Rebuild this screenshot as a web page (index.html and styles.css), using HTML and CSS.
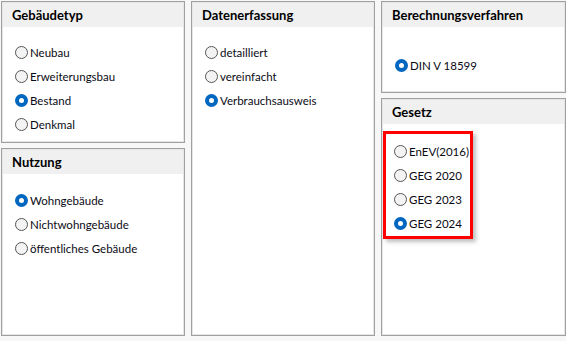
FILE: index.html
```html
<!DOCTYPE html>
<html lang="de">
<head>
    <meta charset="UTF-8">
    <title>Projektdaten</title>
    <link rel="stylesheet" href="styles.css">
</head>
<body>
    <div class="layout">
        <div class="column">
            <div class="panel panel-type">
                <div class="panel-title">Gebäudetyp</div>
                <div class="options">
                    <label class="option"><input type="radio" name="typ"> Neubau</label>
                    <label class="option"><input type="radio" name="typ"> Erweiterungsbau</label>
                    <label class="option"><input type="radio" name="typ" checked> Bestand</label>
                    <label class="option"><input type="radio" name="typ"> Denkmal</label>
                </div>
            </div>
            <div class="panel panel-grow">
                <div class="panel-title">Nutzung</div>
                <div class="options options-wide">
                    <label class="option"><input type="radio" name="nutzung" checked> Wohngebäude</label>
                    <label class="option"><input type="radio" name="nutzung"> Nichtwohngebäude</label>
                    <label class="option"><input type="radio" name="nutzung"> öffentliches Gebäude</label>
                </div>
            </div>
        </div>

        <div class="column">
            <div class="panel panel-grow">
                <div class="panel-title">Datenerfassung</div>
                <div class="options">
                    <label class="option"><input type="radio" name="daten"> detailliert</label>
                    <label class="option"><input type="radio" name="daten"> vereinfacht</label>
                    <label class="option"><input type="radio" name="daten" checked> Verbrauchsausweis</label>
                </div>
            </div>
        </div>

        <div class="column">
            <div class="panel panel-method">
                <div class="panel-title">Berechnungsverfahren</div>
                <div class="options options-method">
                    <label class="option"><input type="radio" name="verfahren" checked> DIN V 18599</label>
                </div>
            </div>
            <div class="panel panel-grow">
                <div class="panel-title">Gesetz</div>
                <div class="law-box">
                    <label class="option"><input type="radio" name="gesetz"> EnEV(2016)</label>
                    <label class="option"><input type="radio" name="gesetz"> GEG 2020</label>
                    <label class="option"><input type="radio" name="gesetz"> GEG 2023</label>
                    <label class="option"><input type="radio" name="gesetz" checked> GEG 2024</label>
                </div>
            </div>
        </div>
    </div>
</body>
</html>
```

FILE: styles.css
```css
body {
    margin: 0;
    background-color: #f7f7f7;
    font-family: Lato, "Liberation Sans", sans-serif;
    font-size: 11.5px;
    color: #0a0a14;
}
.layout {
    display: grid;
    grid-template-columns: 184px 184px 185px;
    column-gap: 6px;
    padding: 1px 0 2px 1px;
    height: 338px;
    box-sizing: border-box;
}
.column {
    display: flex;
    flex-direction: column;
    gap: 5px;
}
.panel {
    background: #fff;
    border: 1px solid #a0a0a0;
    box-shadow: inset 0 0 0 1px #e6e6e6;
    box-sizing: border-box;
}
.panel-type {
    height: 142px;
}
.panel-method {
    height: 92px;
}
.panel-grow {
    flex: 1;
}
.panel-title {
    background: #f0f0f0;
    height: 24px;
    line-height: 24px;
    padding-left: 9px;
    font-size: 13px;
    font-weight: bold;
    color: #000;
    margin: 1px 1px 0;
}
.options {
    display: flex;
    flex-direction: column;
    padding: 13px 0 0 13px;
}
.options-wide {
    padding-top: 14px;
}
.options-method {
    padding-top: 26px;
}
.option {
    display: flex;
    align-items: center;
    height: 24px;
    gap: 2px;
    white-space: nowrap;
}
.option input {
    appearance: none;
    margin: 0;
    width: 13px;
    height: 13px;
    border-radius: 50%;
    border: 1px solid #555;
    background: #f3f3f3;
    box-sizing: border-box;
}
.option input:checked {
    border: 4px solid #0067c0;
    background: #fff;
}
.law-box {
    display: flex;
    flex-direction: column;
    width: 90px;
    box-sizing: border-box;
    margin: 7px 0 0 1px;
    padding: 5px 0 1px 8px;
    border: 3px solid #f00;
    box-shadow: 3px 3px 4px rgba(0, 0, 0, 0.25);
}
```
